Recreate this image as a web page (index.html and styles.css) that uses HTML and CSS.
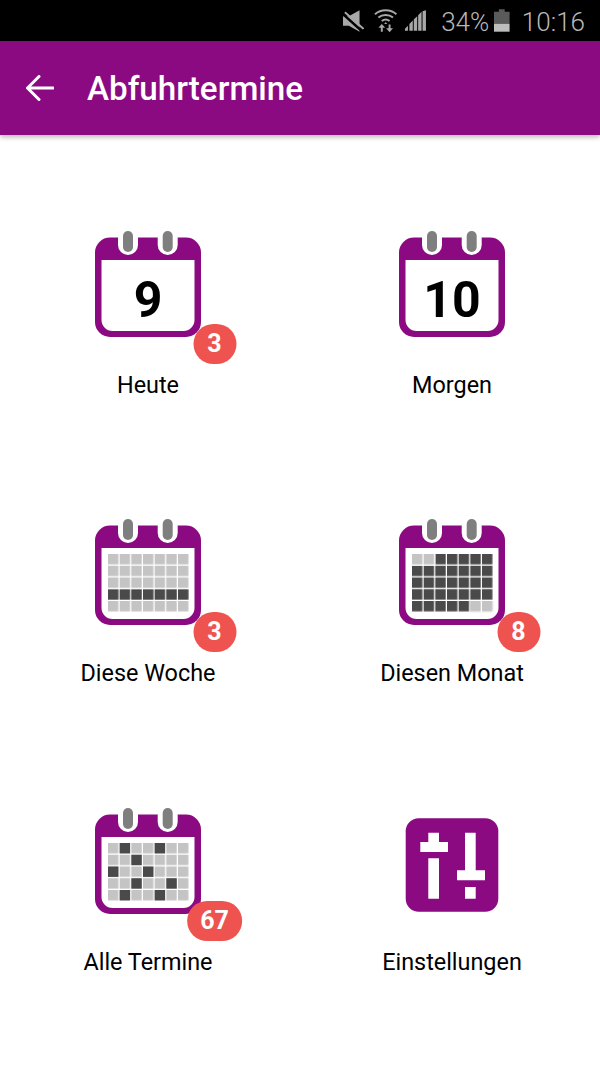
FILE: index.html
```html
<!DOCTYPE html>
<html lang="de">
<head>
<meta charset="utf-8">
<title>Abfuhrtermine</title>
<link rel="stylesheet" href="styles.css">
</head>
<body>
<svg class="defs" width="0" height="0" aria-hidden="true">
  <defs>
    <symbol id="cal" viewBox="0 0 120 120">
      <rect class="purple" x="7" y="9.5" width="106" height="99.5" rx="15"/>
      <path class="paper" d="M13.5 32h93v60a11 11 0 0 1-11 11h-71a11 11 0 0 1-11-11z"/>
      <rect class="paper" x="30" y="0" width="20" height="27" rx="10"/>
      <rect class="paper" x="69.700" y="0" width="20" height="27" rx="10"/>
      <rect class="ring" x="35" y="3" width="10" height="21" rx="5"/>
      <rect class="ring" x="74.700" y="3" width="10" height="21" rx="5"/>
    </symbol>
    <pattern id="light" x="20" y="38" width="11.67" height="11.75" patternUnits="userSpaceOnUse">
      <rect class="cell" width="10.4" height="10.4"/>
    </pattern>
    <pattern id="dark" x="20" y="38" width="11.67" height="11.75" patternUnits="userSpaceOnUse">
      <rect class="cell-dark" width="10.4" height="10.4"/>
    </pattern>
  </defs>
</svg>

<header class="status">
  <svg class="st-mute" width="23" height="24" viewBox="0 0 23 24"><path class="st" d="M1 7h6l11-6v22l-11-6H1z"/><path class="st-cut" d="M1 5l19 17"/><path class="st-slash" d="M3 3l19 17"/></svg>
  <svg class="st-wifi" width="24" height="25" viewBox="0 0 24 25"><path class="st-line" d="M1 6c6-5.500 16-5.500 22 0M4.500 9.500c4-3.500 11-3.500 15 0M8 13c2.500-2 5.500-2 8 0"/><path class="st" d="M12 14l-1.500 2h3zM8 16l-3.500 4H7v4h2v-4h2.500zM16 24.500l3.500-4H17v-4h-2v4h-2.500z"/></svg>
  <svg class="st-signal" width="23" height="22" viewBox="0 0 23 22"><path class="st" d="M0 21v-2l3-3v5zM4.500 21v-7L8 10.500V21zM9 21V9.500L12.500 6v15zM13.500 21V5L17 1.500V21zM18 21V1l3.500-1v21z"/></svg>
  <span class="st-pct">34%</span>
  <svg class="st-batt" width="16" height="23" viewBox="0 0 16 23"><path class="batt-top" d="M5 0h6v2.500h5V15H0V2.500h5z"/><rect class="batt-low" y="15" width="16" height="8"/></svg>
  <span class="st-time">10:16</span>
</header>

<header class="appbar">
  <svg class="back" width="28" height="26" viewBox="0 0 28 26"><path d="M27 13H1.500M13 1.500L1.500 13 13 24.500"/></svg>
  <h1 class="title">Abfuhrtermine</h1>
</header>

<main class="grid">
  <a class="tile">
    <span class="icon">
      <svg width="120" height="120" viewBox="0 0 120 120">
        <use href="#cal"/>
        <text class="digit" x="60" y="89">9</text>
      </svg>
      <span class="badge">3</span>
    </span>
    <span class="label">Heute</span>
  </a>
  <a class="tile">
    <span class="icon">
      <svg width="120" height="120" viewBox="0 0 120 120">
        <use href="#cal"/>
        <text class="digit" x="60" y="89">10</text>
      </svg>
    </span>
    <span class="label">Morgen</span>
  </a>
  <a class="tile">
    <span class="icon">
      <svg width="120" height="120" viewBox="0 0 120 120">
        <use href="#cal"/>
        <rect fill="url(#light)" x="20" y="38" width="81" height="58"/>
        <rect fill="url(#dark)" x="20" y="73.250" width="81" height="11.750"/>
      </svg>
      <span class="badge">3</span>
    </span>
    <span class="label">Diese Woche</span>
  </a>
  <a class="tile">
    <span class="icon">
      <svg width="120" height="120" viewBox="0 0 120 120">
        <use href="#cal"/>
        <rect fill="url(#dark)" x="20" y="38" width="81" height="58"/>
        <rect fill="#fff" x="20" y="38" width="23.340" height="11.750"/>
        <rect fill="url(#light)" x="20" y="38" width="23.340" height="11.750"/>
        <rect fill="#fff" x="78.350" y="85" width="23.340" height="11.750"/>
        <rect fill="url(#light)" x="78.350" y="85" width="23.340" height="11.750"/>
      </svg>
      <span class="badge">8</span>
    </span>
    <span class="label">Diesen Monat</span>
  </a>
  <a class="tile">
    <span class="icon">
      <svg width="120" height="120" viewBox="0 0 120 120">
        <use href="#cal"/>
        <rect fill="url(#light)" x="20" y="38" width="81" height="58"/>
        <rect class="cell-dark" x="31.670" y="38" width="10.400" height="10.400"/>
        <rect class="cell-dark" x="66.680" y="38" width="10.400" height="10.400"/>
        <rect class="cell-dark" x="43.340" y="49.750" width="10.400" height="10.400"/>
        <rect class="cell-dark" x="20" y="61.500" width="10.400" height="10.400"/>
        <rect class="cell-dark" x="55.010" y="61.500" width="10.400" height="10.400"/>
        <rect class="cell-dark" x="43.340" y="73.250" width="10.400" height="10.400"/>
        <rect class="cell-dark" x="78.350" y="73.250" width="10.400" height="10.400"/>
        <rect class="cell-dark" x="31.670" y="85" width="10.400" height="10.400"/>
        <rect class="cell-dark" x="66.680" y="85" width="10.400" height="10.400"/>
      </svg>
      <span class="badge">67</span>
    </span>
    <span class="label">Alle Termine</span>
  </a>
  <a class="tile">
    <span class="icon">
      <svg width="120" height="120" viewBox="0 0 120 120">
        <rect class="purple" x="13.700" y="13.300" width="92.600" height="93.400" rx="13"/>
        <path class="paper" d="M36.300 27.700h10.700V37h9v10H28.300V37h8zM36.300 53.300h10.700v40.400H36.300zM73 27.700h10.700v37.600H93v10H65v-10h8zM73 82h10.700v11.700H73z"/>
      </svg>
    </span>
    <span class="label">Einstellungen</span>
  </a>
</main>
</body>
</html>
```

FILE: styles.css
```css
* {
  box-sizing: border-box;
}

html,
body {
  margin: 0;
  padding: 0;
  background: #fff;
}

body {
  width: 600px;
  height: 1067px;
  overflow: hidden;
  font-family: Roboto, "Liberation Sans", sans-serif;
}

.defs {
  position: absolute;
}

.status {
  height: 41px;
  background: #000;
  display: flex;
  align-items: center;
  padding: 0 15px 0 342px;
  color: #b8b8b8;
}

.st {
  fill: #a8a8a8;
}

.st-cut {
  fill: none;
  stroke: #000;
  stroke-width: 2.500;
}

.st-slash {
  fill: none;
  stroke: #a8a8a8;
  stroke-width: 2;
}

.st-line {
  fill: none;
  stroke: #a8a8a8;
  stroke-width: 2;
}

.st-mute {
  margin-right: 10px;
}

.st-wifi {
  margin-right: 7px;
}

.st-signal {
  margin-right: 14px;
}

.st-pct,
.st-time {
  margin-top: 3px;
  font-size: 26px;
  line-height: 38px;
  font-weight: 300;
}

.st-pct {
  margin-right: 5px;
}

.st-batt {
  margin-right: 12px;
}

.batt-top {
  fill: #5a5a5a;
}

.batt-low {
  fill: #bdbdbd;
}

.appbar {
  position: relative;
  height: 94px;
  background: #8b0a82;
  display: flex;
  align-items: center;
  padding-left: 26px;
  box-shadow: 0 2px 5px rgba(0, 0, 0, 0.3);
}

.back {
  margin-right: 33px;
  fill: none;
  stroke: #fff;
  stroke-width: 3;
  stroke-linecap: round;
  stroke-linejoin: round;
}

.title {
  margin: 2px 0 0;
  color: #fff;
  font-size: 33.200px;
  font-weight: 500;
  line-height: 40px;
}

.grid {
  display: grid;
  grid-template-columns: 1fr 1fr;
  grid-auto-rows: 288.400px;
  column-gap: 8px;
  padding-top: 93px;
}

.tile {
  display: flex;
  flex-direction: column;
  align-items: center;
}

.icon {
  position: relative;
  display: block;
  width: 120px;
  height: 120px;
}

.icon svg {
  display: block;
}

.purple {
  fill: #8b0a82;
}

.paper {
  fill: #fff;
}

.ring {
  fill: #7f7f7f;
}

.cell {
  fill: #c4c4c4;
}

.cell-dark {
  fill: #4a4a4a;
}

.digit {
  font-family: Roboto, "Liberation Sans", sans-serif;
  font-size: 50px;
  font-weight: 700;
  text-anchor: middle;
  fill: #000;
}

.badge {
  position: absolute;
  left: 126.500px;
  top: 96px;
  transform: translateX(-50%);
  min-width: 43px;
  height: 40px;
  padding: 0 13.500px;
  border-radius: 20px;
  background: #ef5350;
  color: #fff;
  font-size: 25px;
  font-weight: 700;
  line-height: 40px;
  text-align: center;
}

.label {
  margin-top: 23px;
  color: #000;
  font-size: 23.400px;
  line-height: 28px;
}
```
